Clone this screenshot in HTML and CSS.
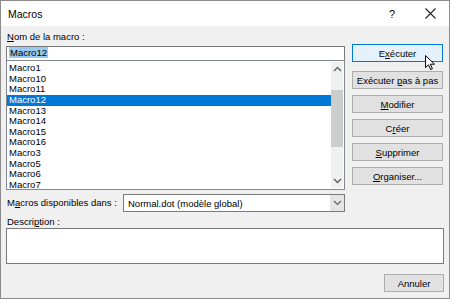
FILE: index.html
```html
<!DOCTYPE html>
<html lang="fr">
  <head>
    <meta charset="utf-8">
    <title>Macros</title>
    <link rel="stylesheet" href="styles.css">
  </head>
  <body>
    <div class="window">
      <div class="titlebar">
        <span class="title">Macros</span>
        <span class="help">?</span>
        <svg class="close" width="11" height="11" viewBox="0 0 11 11">
          <path d="M0.5 0.5 L10.5 10.5 M10.5 0.5 L0.5 10.5" stroke="#222" stroke-width="1.1" fill="none"/>
        </svg>
      </div>

      <div class="content">
        <div class="main">
          <div class="left">
            <div class="label"><u>N</u>om de la macro :</div>
            <div class="namebox"><span class="sel">Macro12</span></div>
            <div class="listbox">
              <div class="items">
                <div class="item">Macro1</div>
                <div class="item">Macro10</div>
                <div class="item">Macro11</div>
                <div class="item selected">Macro12</div>
                <div class="item">Macro13</div>
                <div class="item">Macro14</div>
                <div class="item">Macro15</div>
                <div class="item">Macro16</div>
                <div class="item">Macro3</div>
                <div class="item">Macro5</div>
                <div class="item">Macro6</div>
                <div class="item">Macro7</div>
              </div>
              <div class="scrollbar">
                <svg class="arrow" width="9" height="6" viewBox="0 0 9 6">
                  <path d="M1 5 L4.5 1.5 L8 5" stroke="#606060" stroke-width="1.4" fill="none"/>
                </svg>
                <div class="track"><div class="thumb"></div></div>
                <svg class="arrow" width="9" height="6" viewBox="0 0 9 6">
                  <path d="M1 1 L4.5 4.5 L8 1" stroke="#606060" stroke-width="1.4" fill="none"/>
                </svg>
              </div>
            </div>
          </div>

          <div class="buttons">
            <div class="btn default">
              <span>E<u>x</u>écuter</span>
              <svg class="cursor" width="11" height="16" viewBox="0 0 11 16">
                <path d="M0.5 0.5 L0.5 12.5 L3.5 9.8 L5.6 14.6 L7.4 13.8 L5.4 9.2 L9.5 9.2 Z" fill="#fff" stroke="#000" stroke-width="1"/>
              </svg>
            </div>
            <div class="btn"><span>Exécuter <u>p</u>as à pas</span></div>
            <div class="btn"><span><u>M</u>odifier</span></div>
            <div class="btn"><span>C<u>r</u>éer</span></div>
            <div class="btn"><span><u>S</u>upprimer</span></div>
            <div class="btn"><span><u>O</u>rganiser...</span></div>
          </div>
        </div>

        <div class="source">
          <span class="label">M<u>a</u>cros disponibles dans :</span>
          <div class="combo">
            <span class="combo-text">Normal.dot (modèle global)</span>
            <span class="combo-btn">
              <svg width="9" height="6" viewBox="0 0 9 6">
                <path d="M1 1 L4.5 4.5 L8 1" stroke="#606060" stroke-width="1.2" fill="none"/>
              </svg>
            </span>
          </div>
        </div>

        <div class="label desc-label">Descri<u>p</u>tion :</div>
        <div class="description"></div>

        <div class="footer">
          <div class="btn cancel"><span>Annuler</span></div>
        </div>
      </div>
    </div>
  </body>
</html>
```

FILE: styles.css
```css
body {
    margin: 0;
    font-family: "Liberation Sans", Arial, sans-serif;
    font-size: 9.5px;
    color: #000;
}

u {
    text-decoration: underline;
    text-underline-offset: 1px;
}

.window {
    width: 450px;
    height: 299px;
    box-sizing: border-box;
    border: 1px solid #8c8c8c;
    background-color: #f0f0f0;
    display: flex;
    flex-direction: column;
}

.titlebar {
    height: 25px;
    background-color: #fff;
    display: flex;
    align-items: center;
    padding-left: 7px;
}

.title {
    font-size: 10.5px;
    flex: 1;
}

.help {
    font-size: 11px;
    margin-right: 30px;
}

.close {
    margin-right: 13px;
}

.content {
    padding: 5px 5px 0 5px;
    display: flex;
    flex-direction: column;
}

.main {
    display: flex;
    gap: 7px;
}

.left {
    width: 339px;
    display: flex;
    flex-direction: column;
}

.label {
    height: 12px;
    line-height: 12px;
    padding-left: 1px;
    white-space: nowrap;
}

.namebox {
    margin-top: 3px;
    height: 14px;
    box-sizing: border-box;
    border: 1px solid #7a7a7a;
    border-bottom: none;
    background-color: #fff;
    padding: 1px 0 0 2px;
    line-height: 10px;
}

.sel {
    background-color: #99c9ef;
    padding: 0 1px;
}

.listbox {
    height: 130px;
    box-sizing: border-box;
    border: 1px solid #828790;
    background-color: #fff;
    display: flex;
}

.items {
    flex: 1;
    padding-top: 2px;
}

.item {
    height: 10.65px;
    line-height: 10.65px;
    padding-left: 2px;
}

.item.selected {
    background-color: #0078d7;
    color: #fff;
}

.scrollbar {
    width: 12px;
    margin: 1px 1px 1px 0;
    display: flex;
    flex-direction: column;
    align-items: center;
    background-color: #f0f0f0;
}

.arrow {
    margin: 4px 0;
}

.track {
    flex: 1;
    width: 100%;
}

.thumb {
    margin-top: 14px;
    height: 57px;
    background-color: #cdcdcd;
}

.buttons {
    width: 91px;
    margin-top: 13px;
    display: flex;
    flex-direction: column;
    gap: 6px;
}

.btn {
    position: relative;
    height: 18px;
    box-sizing: border-box;
    border: 1px solid #adadad;
    background-color: #e1e1e1;
    display: flex;
    align-items: center;
    justify-content: center;
    white-space: nowrap;
}

.btn.default {
    border-color: #0078d7;
    background-color: #e5f1fb;
    margin-bottom: 3px;
}

.cursor {
    position: absolute;
    left: 72px;
    top: 10px;
}

.source {
    margin-top: 4px;
    height: 18px;
    display: flex;
    align-items: center;
}

.source .label {
    width: 116px;
}

.combo {
    width: 222px;
    height: 18px;
    box-sizing: border-box;
    border: 1px solid #7a7a7a;
    background-color: #fff;
    display: flex;
    align-items: center;
}

.combo-text {
    flex: 1;
    padding-left: 4px;
}

.combo-btn {
    width: 14px;
    height: 16px;
    background-color: #e5e5e5;
    display: flex;
    align-items: center;
    justify-content: center;
}

.desc-label {
    margin-top: 4px;
}

.description {
    height: 36px;
    width: 438px;
    box-sizing: border-box;
    border: 1px solid #7a7a7a;
    background-color: #fff;
}

.footer {
    margin-top: 10px;
    display: flex;
    justify-content: flex-end;
}

.btn.cancel {
    width: 60px;
}
```
